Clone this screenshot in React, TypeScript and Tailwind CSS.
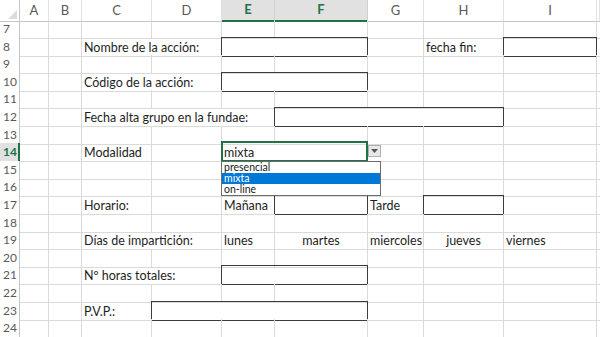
import React from 'react';

type Cell = {
  c: number;
  span?: number;
  text?: string;
  box?: boolean;
  center?: boolean;
  selected?: boolean;
};

const COLS = ['A', 'B', 'C', 'D', 'E', 'F', 'G', 'H', 'I', ''];
const GRID = 'grid grid-cols-[20px_29px_33px_70px_70px_53px_93px_56px_80px_93px_1fr]';

const rows: Record<number, Cell[]> = {
  8: [
    { c: 2, span: 2, text: 'Nombre de la acción:' },
    { c: 4, span: 2, box: true },
    { c: 7, text: 'fecha fin:' },
    { c: 8, box: true },
  ],
  10: [
    { c: 2, span: 2, text: 'Código de la acción:' },
    { c: 4, span: 2, box: true },
  ],
  12: [
    { c: 2, span: 3, text: 'Fecha alta grupo en la fundae:' },
    { c: 5, span: 3, box: true },
  ],
  14: [
    { c: 2, text: 'Modalidad' },
    { c: 4, span: 2, text: 'mixta', selected: true },
  ],
  17: [
    { c: 2, text: 'Horario:' },
    { c: 4, text: 'Mañana' },
    { c: 5, box: true },
    { c: 6, text: 'Tarde' },
    { c: 7, box: true },
  ],
  19: [
    { c: 2, span: 2, text: 'Días de impartición:' },
    { c: 4, text: 'lunes' },
    { c: 5, text: 'martes', center: true },
    { c: 6, text: 'miercoles' },
    { c: 7, text: 'jueves', center: true },
    { c: 8, text: 'viernes' },
  ],
  21: [
    { c: 2, span: 2, text: 'Nº horas totales:' },
    { c: 4, span: 2, box: true },
  ],
  23: [
    { c: 2, text: 'P.V.P.:' },
    { c: 3, span: 3, box: true },
  ],
};

const spanClass = (n: number) =>
  n === 3 ? 'col-span-3' : n === 2 ? 'col-span-2' : 'col-span-1';

const Dropdown = () => (
  <>
    <div className="absolute left-[146px] top-[2px] w-[13px] h-[12px] bg-[#e8e8e8] border border-[#b0b0b0] flex items-center justify-center z-20">
      <svg width="7" height="4" viewBox="0 0 7 4">
        <path d="M0 0 L7 0 L3.5 4 Z" fill="#555" />
      </svg>
    </div>
    <div className="absolute left-[-1px] top-[18px] w-[160px] bg-white border border-[#6b6b6b] z-20 text-[10.5px] leading-[11px] text-[#1a1a1a]">
      <div className="px-[2px] h-[11px] overflow-hidden">presencial</div>
      <div className="px-[2px] h-[11px] overflow-hidden bg-[#0078d7] text-white">mixta</div>
      <div className="px-[2px] h-[11px] overflow-hidden">on-line</div>
    </div>
  </>
);

const Row: React.FC<{ n: number }> = ({ n }) => {
  const cells = rows[n] || [];
  const out: React.ReactNode[] = [];
  let c = 0;
  while (c < COLS.length) {
    const cell = cells.find((x) => x.c === c);
    const span = cell?.span ?? 1;
    out.push(
      <div
        key={c}
        className={`${spanClass(span)} relative border-r border-b border-[#dadada] flex items-end ${
          cell?.center ? 'justify-center' : 'justify-start'
        } px-[2px] whitespace-nowrap ${cell?.selected ? 'z-10' : ''}`}
      >
        {cell?.text && <span className="leading-[16px]">{cell.text}</span>}
        {cell?.box && (
          <span className="absolute -top-px -left-px -right-px -bottom-px border border-[#3c3c3c]" />
        )}
        {cell?.selected && (
          <>
            <span className="absolute -top-[2px] -left-[1px] -right-[1px] -bottom-[1px] border-2 border-[#217346]" />
            <Dropdown />
          </>
        )}
      </div>
    );
    c += span;
  }
  const active = n === 14;
  return (
    <div className={`${GRID} h-[17.6px]`}>
      <div
        className={`flex items-center pl-[3px] text-[12px] border-b ${
          active
            ? 'bg-[#e1e1e1] text-[#217346] font-bold border-r-2 border-r-[#217346] border-b-[#c6c6c6]'
            : 'bg-white text-[#595959] border-r border-r-[#c6c6c6] border-b-[#e2e2e2]'
        }`}
      >
        {n}
      </div>
      {out}
    </div>
  );
};

export default function App() {
  const rowNums = Array.from({ length: 18 }, (_, i) => i + 7);
  return (
    <div className="w-[600px] h-[337px] overflow-hidden bg-white text-[12.5px] text-[#1e1e1e] font-['Lato','Open_Sans',sans-serif]">
      <div className={`${GRID} h-[20px]`}>
        <div className="relative border-r border-b border-[#c6c6c6] bg-white">
          <svg className="absolute right-[2px] bottom-[2px]" width="9" height="9" viewBox="0 0 9 9">
            <path d="M9 0 L9 9 L0 9 Z" fill="#dcdcdc" />
          </svg>
        </div>
        {COLS.map((l, i) => {
          const sel = i === 4 || i === 5;
          return (
            <div
              key={i}
              className={`flex items-center justify-center text-[13px] border-r ${
                sel
                  ? 'bg-[#e1e1e1] border-b-2 border-b-[#217346] border-r-[#cfcfcf] text-[#217346] font-bold'
                  : 'bg-white border-b border-b-[#c6c6c6] border-r-[#e2e2e2] text-[#595959]'
              }`}
            >
              {l}
            </div>
          );
        })}
      </div>
      {rowNums.map((n) => (
        <Row key={n} n={n} />
      ))}
    </div>
  );
}
